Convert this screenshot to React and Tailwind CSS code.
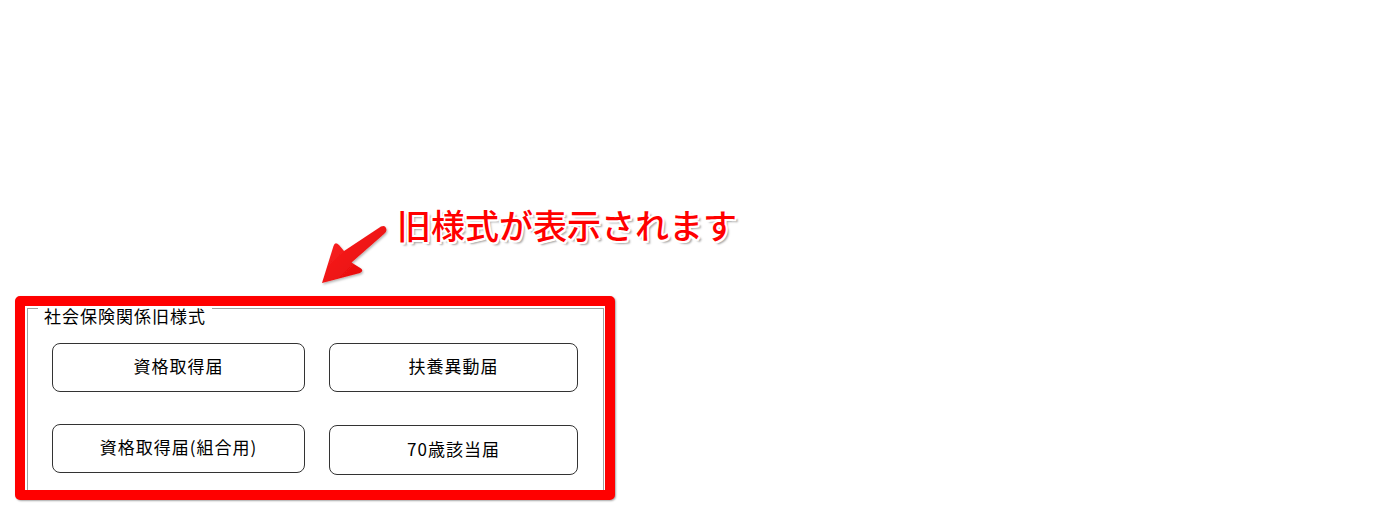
import React from 'react';

const buttons = [
  { label: '資格取得届', className: 'w-[253px] h-[49px]' },
  { label: '扶養異動届', className: 'w-[249px] h-[49px]' },
  { label: '資格取得届(組合用)', className: 'w-[253px] h-[49px]' },
  { label: '70歳該当届', className: 'w-[249px] h-[50px] mt-px' },
];

function Arrow() {
  return (
    <svg className="absolute left-0 top-0" width="1400" height="516" viewBox="0 0 1400 516">
      <defs>
        <linearGradient id="arrowFill" x1="0" y1="0" x2="1" y2="1">
          <stop offset="0" stopColor="#ff2a2a" />
          <stop offset="1" stopColor="#e00000" />
        </linearGradient>
        <filter id="arrowShadow" x="-20%" y="-20%" width="140%" height="140%">
          <feDropShadow dx="1" dy="1.5" stdDeviation="0.8" floodColor="#000" floodOpacity="0.3" />
        </filter>
      </defs>
      <path
        d="M322 283 L333.5 246 Q335 241 339 245 L344 251 L381 226.5 Q385 225 386 228 L386.5 230 Q386.5 232 384 234 L351.5 262.5 L361 268.5 Q364 271 360 273 Z"
        fill="url(#arrowFill)"
        filter="url(#arrowShadow)"
      />
    </svg>
  );
}

export default function App() {
  return (
    <div className="relative w-[1400px] h-[516px] bg-white overflow-hidden font-['Noto_Sans_CJK_JP','Noto_Sans',sans-serif]">
      <Arrow />

      {/* callout text */}
      <div
        className="absolute left-[397px] top-[203px] text-[34px] leading-[44px] font-medium text-[#ff0000]"
        style={{
          textShadow:
            '2px 0 0 #fff, -2px 0 0 #fff, 0 2px 0 #fff, 0 -2px 0 #fff, 1.5px 1.5px 0 #fff, -1.5px -1.5px 0 #fff, 1.5px -1.5px 0 #fff, -1.5px 1.5px 0 #fff, 3px 3px 2px rgba(0,0,0,0.35)',
        }}
      >
        旧様式が表示されます
      </div>

      {/* highlighted group box */}
      <div className="pt-[296px] pl-[15px]">
        <div className="w-[600px] h-[204px] border-[10px] border-[#ff0000] rounded-[5px] shadow-[1px_1px_2px_rgba(0,0,0,0.35)] bg-white pt-[2px] pl-[2px] pr-[1px]">
          <div className="relative h-full border-t border-l border-r border-[#a0a0a0]">
            <div className="absolute left-[10px] -top-[2px] bg-white px-[6px] text-[17px] leading-[18px] tracking-[1px] text-black">
              社会保険関係旧様式
            </div>
            <div className="grid grid-cols-[253px_249px] gap-x-[24px] gap-y-[32px] pl-[24px] pt-[34px]">
              {buttons.map((b) => (
                <div
                  key={b.label}
                  className={`${b.className} flex items-center justify-center pb-[3px] rounded-[8px] border border-[#333] bg-white text-[17px] tracking-[1px] text-black`}
                >
                  {b.label}
                </div>
              ))}
            </div>
          </div>
        </div>
      </div>
    </div>
  );
}
